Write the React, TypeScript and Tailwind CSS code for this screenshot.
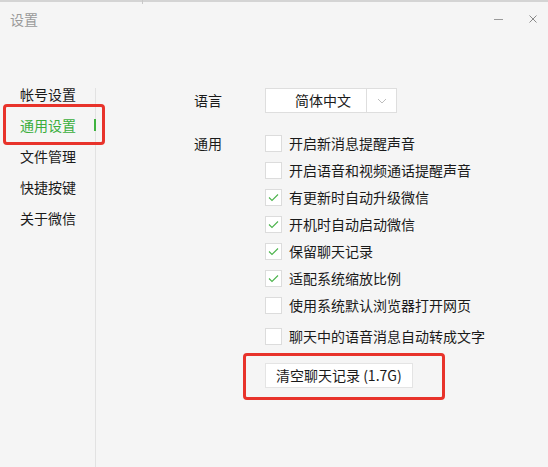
import React from "react";

const font = { fontFamily: '"Noto Sans CJK SC", "Noto Sans", sans-serif' };

function Check({ checked }: { checked: boolean }) {
  return (
    <div className="w-[17px] h-[17px] bg-white border border-[#dcdcdc] flex items-center justify-center shrink-0">
      {checked && (
        <svg width="13" height="13" viewBox="0 0 13 13">
          <polyline points="2,6.5 5,9.5 11,3.5" fill="none" stroke="#4cb44c" strokeWidth="1.1" />
        </svg>
      )}
    </div>
  );
}

const options: [string, boolean][] = [
  ["开启新消息提醒声音", false],
  ["开启语音和视频通话提醒声音", false],
  ["有更新时自动升级微信", true],
  ["开机时自动启动微信", true],
  ["保留聊天记录", true],
  ["适配系统缩放比例", true],
  ["使用系统默认浏览器打开网页", false],
];

const navItems = ["帐号设置", "通用设置", "文件管理", "快捷按键", "关于微信"];

export default function App() {
  return (
    <div
      className="relative w-[548px] h-[467px] bg-[#f5f5f5] overflow-hidden text-[14px] text-[#1a1a1a] flex flex-col"
      style={font}
    >
      {/* top window edge */}
      <div className="h-[2px] bg-[#d4d4d4] shrink-0" />
      <div className="absolute left-[142px] top-0 w-px h-[4px] bg-[#c8c8c8]" />

      {/* title bar */}
      <div className="h-[34px] flex items-center pl-[10px] pr-[11px] shrink-0">
        <span className="text-[14px] text-[#9a9a9a] leading-none">设置</span>
        <div className="ml-auto flex items-center gap-[26px]">
          <div className="w-[9px] h-px bg-[#9a9a9a]" />
          <svg width="8" height="8" viewBox="0 0 8 8">
            <path d="M0.5 0.5 L7.5 7.5 M7.5 0.5 L0.5 7.5" stroke="#8a8a8a" strokeWidth="1" />
          </svg>
        </div>
      </div>

      {/* main */}
      <div className="flex flex-1 mt-[52px]">
        {/* sidebar */}
        <div className="w-[96px] border-r border-[#e2e2e2] shrink-0">
          <div className="-mt-[9px]">
            {navItems.map((t, i) => (
              <div
                key={t}
                className={`relative h-[31px] flex items-center pl-[20px] ${i === 1 ? "text-[#3aae3c]" : ""}`}
              >
                {t}
                {i === 1 && <div className="absolute right-[-1px] top-[9px] w-[2px] h-[12px] bg-[#3fb33f]" />}
              </div>
            ))}
          </div>
        </div>

        {/* content */}
        <div className="flex-1 pl-[98px]">
          <div className="flex items-center h-[25px]">
            <div className="w-[71px]">语言</div>
            <div className="w-[132px] h-[25px] bg-white border border-[#dedede] flex">
              <div className="w-[101px] border-r border-[#dedede] flex items-center pl-[29px]">简体中文</div>
              <div className="flex-1 flex items-center justify-center">
                <svg width="10" height="6" viewBox="0 0 10 6">
                  <polyline points="1,1 5,5 9,1" fill="none" stroke="#bdbdbd" strokeWidth="1" />
                </svg>
              </div>
            </div>
          </div>

          <div className="flex mt-[17px]">
            <div className="w-[71px] h-[27px] flex items-center">通用</div>
            <div className="flex flex-col">
              {options.map(([t, c]) => (
                <div key={t} className="h-[27px] flex items-center gap-[7px]">
                  <Check checked={c} />
                  <span>{t}</span>
                </div>
              ))}
              <div className="h-[27px] flex items-center gap-[7px] mt-[4px]">
                <Check checked={false} />
                <span>聊天中的语音消息自动转成文字</span>
              </div>
              <div className="mt-[13px]">
                <button className="h-[25px] px-[10px] bg-white border border-[#e4e4e4] flex items-center">
                  清空聊天记录 (1.7G)
                </button>
              </div>
            </div>
          </div>
        </div>
      </div>

      {/* annotation boxes */}
      <div className="absolute left-[3px] top-[104px] w-[102px] h-[41px] border-[3px] border-[#e8332b] rounded-[4px]" />
      <div className="absolute left-[243px] top-[353px] w-[202px] h-[47px] border-[3px] border-[#e8332b] rounded-[4px]" />
    </div>
  );
}
